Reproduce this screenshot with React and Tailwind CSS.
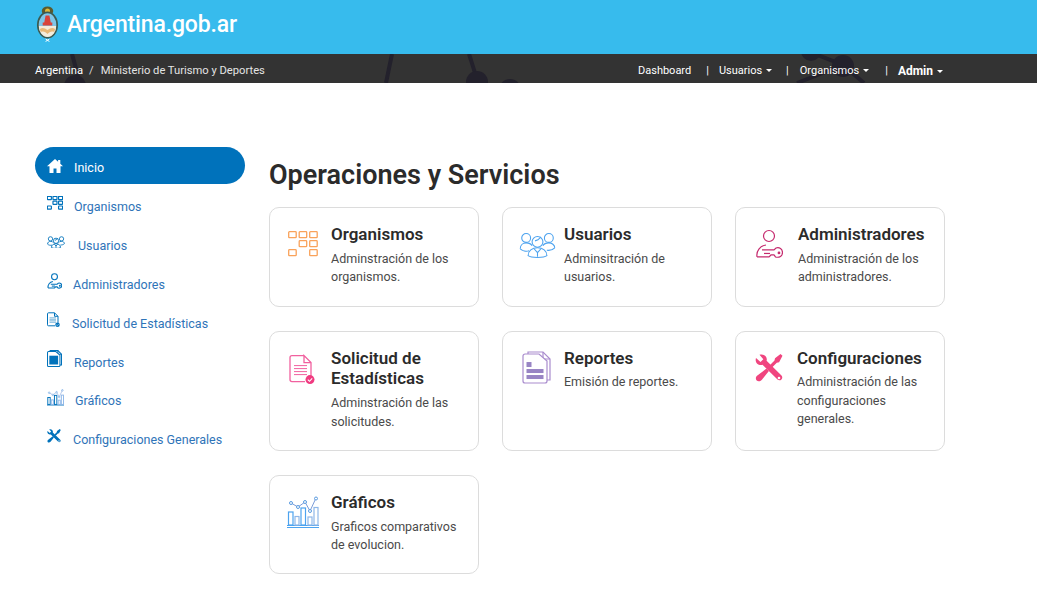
import React from "react";

const Caret = () => <span className="inline-block ml-[4px] align-middle w-0 h-0 border-x-[3px] border-x-transparent border-t-[3px] border-t-white" />;

function Escudo() {
  return (
    <svg width="23" height="36" viewBox="0 0 24 36" preserveAspectRatio="none" className="shrink-0">
      <ellipse cx="12" cy="5" rx="6" ry="4.5" fill="#5b5a2e" />
      <circle cx="12" cy="5" r="2.6" fill="#e0b93a" />
      <ellipse cx="12" cy="19" rx="11" ry="13.5" fill="#3d5a50" />
      <ellipse cx="12" cy="19" rx="9.2" ry="11.8" fill="#7fc6e8" />
      <path d="M3 20h18c0 6-4 11-9 11S3 26 3 20z" fill="#f4ecdc" />
      <path d="M4 23c3-2 5-1 8 1 3-2 5-3 8-1l-1 3c-3-1-5 0-7 2-2-2-4-3-7-2z" fill="#e8b878" />
      <path d="M10 9.500h4l1.400 7h1.600v3H7v-3h1.600z" fill="#d9433a" />
      <path d="M10 33l4 2.500M14 33l-4 2.500" stroke="#ffffff" strokeWidth="1" />
    </svg>
  );
}

function Deco() {
  const c = "#23212c";
  return (
    <svg className="absolute inset-0 w-full h-full" viewBox="0 0 1037 29" preserveAspectRatio="none">
      <g stroke={c} strokeWidth="4" fill="none">
        <path d="M72 0l6 22" />
        <path d="M392 0l-6 29" />
        <path d="M469 0l7 22" />
        <path d="M810 -2L843 11L864 29" />
        <path d="M843 11L797 29" />
      </g>
      <g fill={c}>
        <circle cx="75" cy="32" r="11" />
        <circle cx="477" cy="28" r="11" />
        <circle cx="510" cy="36" r="11" />
        <circle cx="811" cy="-3" r="10" />
        <circle cx="843" cy="12" r="11" />
      </g>
    </svg>
  );
}

function OrgIcon({ size = 30, color = "#f9a25a", sw = 1.3 }) {
  const cells = [[0, 0], [10.500, 0], [21, 0], [10.500, 9], [21, 9], [0, 18], [21, 18]];
  return (
    <svg width={size} height={size * 0.85} viewBox="0 0 30 25.500" fill="none" stroke={color} strokeWidth={sw}>
      {cells.map(([x, y], i) => <rect key={i} x={x + 0.7} y={y + 0.7} width="7.500" height="6" rx="0.8" />)}
    </svg>
  );
}

function UsersIcon({ size = 37, color = "#4da3ef", sw = 1.1 }) {
  return (
    <svg width={size} height={size * 0.72} viewBox="0 0 37 27" fill="none" stroke={color} strokeWidth={sw}>
      <circle cx="7" cy="6" r="4.500" />
      <path d="M1 17c0-4 3-6 6-6s5 1 6 3" />
      <path d="M1 17c2 2 6 3 9 2" />
      <circle cx="30" cy="6" r="4.500" />
      <path d="M36 16c0-3-3-5-6-5s-5 1-6 3M36 16c-2 2-5 3-8 2.500" />
      <circle cx="18.500" cy="10" r="5.500" />
      <path d="M16 9l3-1 3-3" />
      <path d="M9 24c0-5 4-8 9.500-8S28 19 28 24c-3 2.500-16 2.500-19 0z" />
      <path d="M15 17l3.500 4 3.500-4M18.500 21v4" />
    </svg>
  );
}

function AdminIcon({ size = 28, color = "#c5296d", sw = 1.2 }) {
  return (
    <svg width={size} height={size * 1.07} viewBox="0 0 28 30" fill="none" stroke={color} strokeWidth={sw}>
      <circle cx="14" cy="7" r="5.500" />
      <path d="M2 28c-1-6 3-11 9-12" />
      <path d="M2 28h12l2-2h3l1.500 2c4 1 7-1 7-4.500S24.500 18 21 19l-2 2H7" />
      <path d="M9 24.500h6" />
      <circle cx="24" cy="24" r="0.800" fill={color} />
    </svg>
  );
}

function SolIcon({ size = 26, color = "#f1619f", tick = "#f03a80", sw = 1.3 }) {
  return (
    <svg width={size} height={size * 1.2} viewBox="0 0 26 30" fill="none">
      <path d="M15 1H3a2 2 0 0 0-2 2v22a2 2 0 0 0 2 2h13M22 21V8l-7-7v7h7" stroke={color} strokeWidth={sw} />
      <path d="M5 11h13M5 14h13M5 17h13M5 20h13" stroke={color} strokeWidth="1" />
      <circle cx="21" cy="25" r="4.500" fill={tick} />
      <path d="M18.800 25l1.700 1.700 2.700-3" stroke="#fff" strokeWidth="1.100" />
    </svg>
  );
}

function RepIcon({ size = 29, color = "#a98cce", fillc = "#9884c4", sw = 1.2, solid = false }) {
  return (
    <svg width={size} height={size * 1.14} viewBox="0 0 29 33" fill="none">
      <path d="M6 3V1h15l7 7v21h-3" stroke={color} strokeWidth={sw} />
      <path d="M21 1v7h7" stroke={color} strokeWidth={sw} />
      <path d="M17 3H3a2 2 0 0 0-2 2v25a2 2 0 0 0 2 2h20a2 2 0 0 0 2-2V10l-8-7z" stroke={color} strokeWidth={sw} fill="#fff" />
      {solid ? (
        <rect x="4.500" y="11" width="17" height="17" fill={fillc} />
      ) : (
        <>
          <rect x="4.500" y="11" width="5" height="5" fill={fillc} />
          <rect x="4.500" y="18" width="17" height="4" fill={fillc} />
          <rect x="4.500" y="24" width="17" height="4" fill={fillc} />
        </>
      )}
    </svg>
  );
}

function ToolsIcon({ size = 28, color = "#f0457f" }) {
  return (
    <svg width={size} height={size} viewBox="0 0 28 28" fill={color}>
      <path d="M1 4l4.500 4 2.800-2.800L4.500 0.800C8.500 -0.800 12.800 2.400 11.600 6.800L26.500 21.500c2.400 2.700-1.300 6.500-4 4L7.500 10.800C3.500 12 -0.500 8.500 1 4z" />
      <path d="M27.500 1.800L25.500 0 20 4.200l-0.500 2.300-4.500 4.500 2.300 2.300 4.500-4.500 2.300-.5z" />
      <path d="M11.500 14.500l2.400 2.400-6.400 8c-1.600 2.400-4.400 2.900-5.800 1.500S0.500 22.500 3 21z" />
      <circle cx="24" cy="24" r="1.300" fill="#fff" />
    </svg>
  );
}

function ChartIcon({ size = 32, color = "#4da3ef", sw = 1.2 }) {
  return (
    <svg width={size} height={size} viewBox="0 0 32 32" fill="none">
      <path d="M0 29.500h32M0 31.500h32" stroke={color} strokeWidth="1" />
      <g stroke={color} strokeWidth={sw}>
        <rect x="1.500" y="16" width="4.500" height="13" />
        <rect x="14" y="12" width="4.500" height="17" />
      </g>
      <g stroke="#8fb7e8" strokeWidth={sw}>
        <rect x="8" y="20.500" width="4" height="8.500" />
        <rect x="21" y="21" width="4" height="8" />
        <rect x="27" y="11.500" width="4" height="17.500" />
      </g>
      <path d="M4 7l7 4 7-5 5 9 6-13" stroke="#7a9bd8" strokeWidth="1" />
      <g stroke="#5a9be0" strokeWidth="1" fill="#fff">
        <circle cx="4" cy="7" r="1.500" />
        <circle cx="11" cy="11" r="1.500" />
        <circle cx="18" cy="6" r="1.500" />
        <circle cx="23" cy="15" r="1.500" />
        <circle cx="29" cy="2.500" r="1.500" />
      </g>
    </svg>
  );
}

const HomeIcon = () => (
  <svg width="16" height="14" viewBox="0 0 16 14" fill="#fff">
    <path d="M8 0L0 7.300h2.500V14h4V9.500h3V14h4V7.300H16L13.300 4.800V1h-2.200v1.800z" />
  </svg>
);

const blue = "#0072bb";
const side = [
  { label: "Organismos", ml: "ml-[8px]", w: "w-[19px]", icon: <OrgIcon size={16} color={blue} sw={2.200} /> },
  { label: "Usuarios", ml: "ml-[12px]", w: "w-[19px]", icon: <UsersIcon size={18} color={blue} sw={1.800} /> },
  { label: "Administradores", ml: "ml-[10px]", w: "w-[16px]", icon: <AdminIcon size={15} color={blue} sw={2} /> },
  { label: "Solicitud de Estadísticas", ml: "ml-[12px]", w: "w-[13px]", icon: <SolIcon size={13} color={blue} tick={blue} sw={2} /> },
  { label: "Reportes", ml: "ml-[12px]", w: "w-[15px]", icon: <RepIcon size={15} color={blue} fillc={blue} sw={2} solid /> },
  { label: "Gráficos", ml: "ml-[11px]", w: "w-[17px]", cls: "-mt-[1px]", icon: <ChartIcon size={17} color={blue} sw={1.800} /> },
  { label: "Configuraciones Generales", ml: "ml-[12px]", w: "w-[14px]", icon: <ToolsIcon size={14} color={blue} /> },
];

const cards = [
  { t: "Organismos", d: ["Adminstración de los", "organismos."], h: "h-[100px]", icon: <OrgIcon />, pl: "pl-[18px]", iw: "w-[43px]", it: "pt-[23px]", dc: "mt-[6px] leading-[18px]" },
  { t: "Usuarios", d: ["Adminsitración de", "usuarios."], h: "h-[100px]", icon: <UsersIcon />, pl: "pl-[16px]", iw: "w-[45px]", it: "pt-[24px]", dc: "mt-[6px] leading-[18px]" },
  { t: "Administradores", d: ["Administración de los", "administradores."], h: "h-[100px]", icon: <AdminIcon />, pl: "pl-[19px]", iw: "w-[43px]", it: "pt-[21px]", dc: "mt-[6px] leading-[18px]" },
  { t: ["Solicitud de", "Estadísticas"], d: ["Adminstración de las", "solicitudes."], h: "h-[120px]", icon: <SolIcon />, pl: "pl-[19px]", iw: "w-[42px]", it: "pt-[22px]", dc: "mt-[5px] leading-[19px]" },
  { t: "Reportes", d: ["Emisión de reportes."], h: "h-[120px]", icon: <RepIcon />, pl: "pl-[19px]", iw: "w-[42px]", it: "pt-[19px]", dc: "mt-[5px] leading-[18.500px]" },
  { t: "Configuraciones", d: ["Administración de las", "configuraciones", "generales."], h: "h-[120px]", icon: <ToolsIcon />, pl: "pl-[19px]", iw: "w-[42px]", it: "pt-[22px]", dc: "mt-[5px] leading-[18.500px]" },
  { t: "Gráficos", d: ["Graficos comparativos", "de evolucion."], h: "h-[99px]", icon: <ChartIcon />, pl: "pl-[17px]", iw: "w-[44px]", it: "pt-[20px]", dc: "mt-[6px] leading-[18px]" },
];

function Card({ c }) {
  const lines = Array.isArray(c.t) ? c.t : [c.t];
  return (
    <div className={`${c.h} bg-white border border-[#dcdcdc] rounded-[10px] flex ${c.pl} pt-[16px]`}>
      <div className={`${c.iw} shrink-0 -mt-[16px] ${c.it}`}>{c.icon}</div>
      <div>
        {lines.map((l) => (
          <div key={l} className="text-[17px] leading-[20px] font-semibold text-[#2b2b2b]">{l}</div>
        ))}
        <div className={`${c.dc} text-[12.500px] text-[#4a4a4a]`}>
          {c.d.map((l) => (
            <div key={l}>{l}</div>
          ))}
        </div>
      </div>
    </div>
  );
}

export default function App() {
  return (
    <div className="min-h-[614px] bg-white font-['Roboto',sans-serif]">
      <header className="h-[54px] bg-[#37bbed] flex items-center pl-[36px] gap-[8px] pb-[6px]">
        <Escudo />
        <span className="text-[23px] tracking-[-0.15px] leading-none font-medium text-white">Argentina.gob.ar</span>
      </header>
      <div className="relative h-[29px] bg-[#333333] overflow-hidden">
        <Deco />
        <div className="relative h-full pl-[35px] pr-[94px] pt-[5px] flex items-center justify-between text-[11px] text-white">
          <div className="flex items-center text-[11.200px]">
            <span>Argentina</span>
            <span className="ml-[6px] text-[#d8d8d8]">/</span>
            <span className="ml-[7px] text-[#e4e4e4]">Ministerio de Turismo y Deportes</span>
          </div>
          <div className="flex items-center">
            <span>Dashboard</span>
            <span className="ml-[15px]">|</span>
            <span className="ml-[10px]">Usuarios<Caret /></span>
            <span className="ml-[14px]">|</span>
            <span className="ml-[11px]">Organismos<Caret /></span>
            <span className="ml-[16px]">|</span>
            <span className="ml-[10px] text-[12px] font-bold">Admin<Caret /></span>
          </div>
        </div>
      </div>
      <main className="flex pl-[35px] pt-[64px]">
        <aside className="w-[210px] shrink-0 flex flex-col gap-[2px]">
          <div className="h-[37px] rounded-[19px] bg-[#0072bb] flex items-center pl-[12px] text-white">
            <span className="w-[27px] shrink-0"><HomeIcon /></span>
            <span className="text-[12.500px] mt-[6px]">Inicio</span>
          </div>
          {side.map((s) => (
            <div key={s.label} className={`h-[37px] flex items-center pl-[12px] ${s.cls || ""}`}>
              <span className={`${s.w} shrink-0 flex justify-start -mt-[3px]`}>{s.icon}</span>
              <span className={`${s.ml} text-[12.500px] mt-[6px] text-[#2f74b8]`}>{s.label}</span>
            </div>
          ))}
        </aside>
        <section className="ml-[24px] w-[676px]">
          <h1 className="text-[27px] leading-[34px] font-semibold text-[#2b2b2b] mt-[11px] mb-[15px]">Operaciones y Servicios</h1>
          <div className="grid grid-cols-3 gap-x-[23px] gap-y-[24px]">
            {cards.map((c, i) => <Card key={i} c={c} />)}
          </div>
        </section>
      </main>
    </div>
  );
}
